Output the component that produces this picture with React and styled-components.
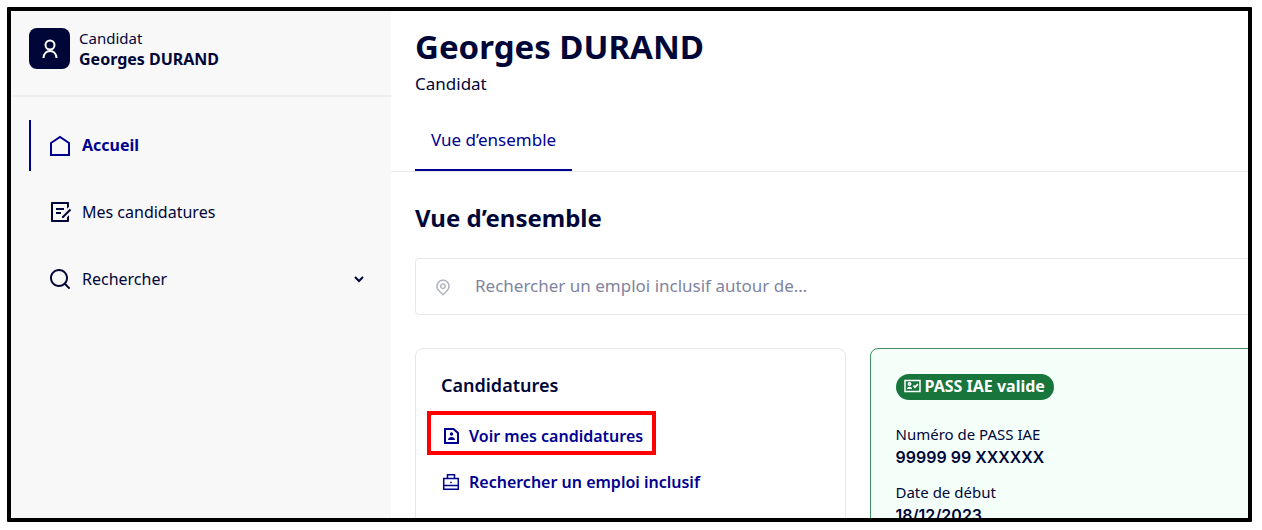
import React from "react";
import styled, { createGlobalStyle } from "styled-components";
import {
    RiDraftLine,
    RiSearchLine,
    RiMapPinLine,
} from "react-icons/ri";


const GlobalStyle = createGlobalStyle`
    * {
        box-sizing: border-box;
    }

    body {
        margin: 0;
        background-color: #FFFFFF;
        color: #000638;
        font-family: "Noto Sans", "Open Sans", sans-serif;
        font-size: 16px;
        line-height: 24px;
    }

    h1, h2, h3, p, dl, dd, ul {
        margin: 0;
        padding: 0;
    }
`;

const Frame = styled.div`
    display: flex;
    height: calc(100vh - 15px);
    margin: 7px 10px 8px 7px;
    border: 4px solid #000000;
    border-radius: 1px;
    overflow: hidden;
`;

const Sidebar = styled.aside`
    flex: 0 0 380px;
    background-color: #F8F8F8;
`;

const Profile = styled.div`
    display: flex;
    align-items: flex-start;
    gap: 9px;
    height: 86px;
    padding: 17px 18px;
    border-bottom: 2px solid #EEEEEE;
`;

const Avatar = styled.span`
    display: flex;
    align-items: center;
    justify-content: center;
    width: 41px;
    height: 41px;
    border-radius: 8px;
    background-color: #000638;
    color: #FFFFFF;
`;

const ProfileText = styled.p`
    font-size: 15px;
    line-height: 21px;
`;

const ProfileName = styled.strong`
    display: block;
    font-size: 16px;
`;

const Nav = styled.nav`
    padding: 23px 18px;
`;

const NavList = styled.ul`
    display: flex;
    flex-direction: column;
    gap: 16px;
    list-style: none;
`;

const NavLink = styled.a`
    display: flex;
    align-items: center;
    gap: 10px;
    height: 51px;
    padding: 0 9px 2px 17px;
    border-left: 2px solid ${({$active}) => ($active ? "#000091" : "transparent")};
    color: ${({$active}) => ($active ? "#000091" : "#000638")};
    font-weight: ${({$active}) => ($active ? 700 : 400)};
    text-decoration: none;
`;

const NavIcon = styled.span`
    display: flex;
    font-size: 24px;
`;

const Chevron = styled.svg`
    width: 10px;
    height: 10px;
    margin-left: auto;
    fill: none;
    stroke: currentColor;
    stroke-width: 2;
`;

/* runs past the right edge of the frame */
const Main = styled.main`
    flex: 1 0 auto;
    width: calc(100% - 304px);
`;

const Header = styled.header`
    padding: 15px 24px 0;
    border-bottom: 1px solid #E8E8EC;
`;

const Title = styled.h1`
    font-size: 33px;
    line-height: 42px;
`;

const Role = styled.p`
    margin-top: 4px;
    font-size: 17px;
`;

const Tabs = styled.div`
    display: flex;
    margin-top: 15px;
`;

const Tab = styled.button`
    height: 60px;
    margin-bottom: 0;
    padding: 0 16px;
    border: none;
    border-bottom: 2px solid #000091;
    background: none;
    color: #000091;
    font: inherit;
    font-size: 17px;
    cursor: pointer;
`;

const Content = styled.div`
    padding: 31px 24px;
`;

const SectionTitle = styled.h2`
    font-size: 24px;
    font-weight: 700;
    line-height: 30px;
`;

const SearchBox = styled.label`
    display: flex;
    align-items: center;
    gap: 23px;
    height: 57px;
    margin-top: 25px;
    padding: 0 18px;
    border: 1px solid #E8E8EC;
    border-radius: 4px;
    color: #B0B3C3;
    font-size: 18px;
`;

const SearchInput = styled.input`
    flex: 1;
    padding: 0 0 2px;
    border: none;
    outline: none;
    background: none;
    color: #000638;
    font: inherit;
    font-size: 17px;
    &::placeholder {
      color: #7F84A0;
      opacity: 1;
    }
`;

const Cards = styled.div`
    display: grid;
    grid-template-columns: 1fr 1fr;
    gap: 24px;
    margin-top: 33px;
`;

const Card = styled.section`
    min-height: 220px;
    padding: 24px 25px;
    border: 1px solid ${({$valid}) => ($valid ? "#3F9260" : "#E8E8EC")};
    border-radius: 8px;
    background-color: ${({$valid}) => ($valid ? "#F5FFFA" : "#FFFFFF")};
`;

const CardTitle = styled.h3`
    font-size: 18px;
    font-weight: 600;
    line-height: 24px;
`;

const Actions = styled.div`
    display: flex;
    flex-direction: column;
    align-items: flex-start;
    gap: 2px;
    margin: 14px 0 0 -14px;
`;

const ActionLink = styled.a`
    display: flex;
    align-items: center;
    gap: 9px;
    height: 44px;
    padding: 6px 9px 0 11px;
    border: 4px solid ${({$highlighted}) => ($highlighted ? "#FF0000" : "transparent")};
    color: #000091;
    font-weight: 600;
    text-decoration: none;
`;

const Icon = styled.svg`
    width: 18px;
    height: 18px;
    fill: none;
    stroke: currentColor;
    stroke-width: 2;
`;

const Badge = styled.span`
    display: flex;
    align-items: center;
    gap: 4px;
    width: fit-content;
    height: 26px;
    margin-top: 1px;
    padding: 0 9px 2px 8px;
    border-radius: 13px;
    background-color: #18753C;
    color: #FFFFFF;
    font-weight: 700;
`;

const Details = styled.dl`
    display: flex;
    flex-direction: column;
    gap: 12px;
    margin-top: 23px;
`;

const DetailLabel = styled.dt`
    font-size: 15px;
    line-height: 22px;
`;

const DetailValue = styled.dd`
    font-family: Inter, sans-serif;
    font-weight: 600;
`;

function UserIcon() {
    return <svg width="18" height="22" viewBox="0 0 18 22" fill="none" stroke="currentColor" strokeWidth="2">
        <circle cx="9" cy="7" r="4.500"/>
        <path d="M2.500 20 C3 10.500 15 10.500 15.500 20"/>
    </svg>;
}

function HomeIcon() {
    return <svg width="24" height="24" viewBox="0 0 24 24" fill="none" stroke="currentColor" strokeWidth="2">
        <path d="M3 10 L12 4 L21 10 V22 H3 Z"/>
    </svg>;
}

function FileUserIcon() {
    return <Icon viewBox="0 0 18 18">
        <path d="M3 2 H11.500 L16 6 V16 H3 Z"/>
        <circle cx="9.500" cy="7" r="1.700" fill="currentColor" stroke="none"/>
        <path d="M6 13 C6 9 13 9 13 13 Z" fill="currentColor" stroke="none"/>
    </Icon>;
}

function BriefcaseIcon() {
    return <Icon viewBox="0 0 18 18">
        <path strokeWidth="1.500" d="M1.700 5.500 H16.300 V16.200 H1.700 Z M5.500 5.500 V1.700 H12.500 V5.500 M1.700 12.500 H16.300 M8.200 9.500 H9.800"/>
    </Icon>;
}

function PassIcon() {
    return <svg width="17" height="14" viewBox="0 0 17 14" fill="none" stroke="currentColor" strokeWidth="1.500">
        <path d="M1 1.500 H16 V12.500 H1 Z"/>
        <path d="M9.500 6.500 L11 8.200 L14 5.200" strokeWidth="1.800"/>
        <circle cx="5.500" cy="5" r="1.200"/>
        <path d="M3 10 C3 7 8 7 8 10 Z" fill="currentColor" stroke="none"/>
    </svg>;
}

function App() {
    return <>
        <GlobalStyle/>
        <Frame>
            <Sidebar>
                <Profile>
                    <Avatar><UserIcon/></Avatar>
                    <ProfileText>Candidat<ProfileName>Georges DURAND</ProfileName></ProfileText>
                </Profile>
                <Nav>
                    <NavList>
                        <li><NavLink href="#accueil" $active><NavIcon><HomeIcon/></NavIcon>Accueil</NavLink></li>
                        <li><NavLink href="#candidatures"><NavIcon><RiDraftLine/></NavIcon>Mes candidatures</NavLink></li>
                        <li>
                            <NavLink href="#rechercher">
                                <NavIcon><RiSearchLine/></NavIcon>
                                Rechercher
                                <Chevron viewBox="0 0 10 10"><path d="M1 3 L5 7 L9 3"/></Chevron>
                            </NavLink>
                        </li>
                    </NavList>
                </Nav>
            </Sidebar>
            <Main>
                <Header>
                    <Title>Georges DURAND</Title>
                    <Role>Candidat</Role>
                    <Tabs role="tablist">
                        <Tab type="button" role="tab" aria-selected="true">Vue d’ensemble</Tab>
                    </Tabs>
                </Header>
                <Content>
                    <SectionTitle>Vue d’ensemble</SectionTitle>
                    <SearchBox>
                        <RiMapPinLine/>
                        <SearchInput
                            type="text"
                            aria-label="Rechercher un emploi inclusif"
                            placeholder="Rechercher un emploi inclusif autour de…"
                        />
                    </SearchBox>
                    <Cards>
                        <Card>
                            <CardTitle>Candidatures</CardTitle>
                            <Actions>
                                <ActionLink href="#voir" $highlighted><FileUserIcon/>Voir mes candidatures</ActionLink>
                                <ActionLink href="#emploi"><BriefcaseIcon/>Rechercher un emploi inclusif</ActionLink>
                            </Actions>
                        </Card>
                        <Card $valid>
                            <Badge><PassIcon/>PASS IAE valide</Badge>
                            <Details>
                                <div>
                                    <DetailLabel>Numéro de PASS IAE</DetailLabel>
                                    <DetailValue>99999 99 XXXXXX</DetailValue>
                                </div>
                                <div>
                                    <DetailLabel>Date de début</DetailLabel>
                                    <DetailValue>18/12/2023</DetailValue>
                                </div>
                            </Details>
                        </Card>
                    </Cards>
                </Content>
            </Main>
        </Frame>
    </>;
}

export default App;
